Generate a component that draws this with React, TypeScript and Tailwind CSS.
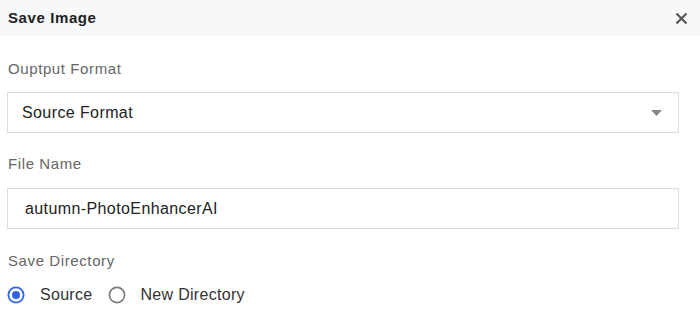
import React, { useState } from 'react';

const font = { fontFamily: '"Liberation Sans", Arial, sans-serif' };

const Radio: React.FC<{ checked: boolean; label: string; onClick: () => void }> = ({ checked, label, onClick }) => (
  <button type="button" onClick={onClick} className="flex items-center h-5 text-[16px] tracking-[0.3px] text-[#333]">
    <svg width="18" height="18" viewBox="0 0 18 18" className="shrink-0">
      {checked ? (
        <>
          <circle cx="9" cy="9" r="7.6" fill="none" stroke="#2f66e0" strokeWidth="1.8" />
          <circle cx="9" cy="9" r="4" fill="#2f66e0" />
        </>
      ) : (
        <circle cx="9" cy="9" r="7.6" fill="none" stroke="#7a7a7a" strokeWidth="1.6" />
      )}
    </svg>
    <span className="ml-[15px]">{label}</span>
  </button>
);

export default function App() {
  const [dir, setDir] = useState<'source' | 'new'>('source');
  const [name, setName] = useState('autumn-PhotoEnhancerAI');

  return (
    <div className="w-[700px] h-[321px] bg-white overflow-hidden" style={font}>
      <div className="h-9 bg-[#f7f8fa] flex items-center justify-between pl-2 pr-3">
        <h2 className="text-[15px] font-bold tracking-[0.6px] text-[#222]">Save Image</h2>
        <svg width="13" height="13" viewBox="0 0 13 13">
          <path d="M1.5 1.5 L11.5 11.5 M11.5 1.5 L1.5 11.5" stroke="#555" strokeWidth="2.2" />
        </svg>
      </div>

      <div className="flex flex-col pl-[7px]">
        <label className="mt-[23px] h-5 leading-5 text-[15px] tracking-[0.6px] text-[#666] pl-px">Ouptput Format</label>
        <div className="mt-[13px] w-[672px] h-[41px] border border-[#dcdcdc] flex items-center justify-between pl-[14px] pr-[16px]">
          <span className="text-[16px] tracking-[0.4px] text-[#222]">Source Format</span>
          <svg width="11" height="6" viewBox="0 0 11 6">
            <path d="M0 0 L11 0 L5.5 6 Z" fill="#888" />
          </svg>
        </div>

        <label className="mt-[21px] h-5 leading-5 text-[15px] tracking-[0.6px] text-[#666] pl-px">File Name</label>
        <input
          value={name}
          onChange={(e) => setName(e.target.value)}
          className="mt-[14px] w-[672px] h-[41px] border border-[#dcdcdc] pl-[17px] text-[16px] tracking-[0.4px] text-[#222] outline-none"
          style={font}
        />

        <label className="mt-[22px] h-5 leading-5 text-[15px] tracking-[0.6px] text-[#666] pl-px">Save Directory</label>
        <div className="mt-[14px] flex items-center gap-[15px]">
          <Radio checked={dir === 'source'} label="Source" onClick={() => setDir('source')} />
          <Radio checked={dir === 'new'} label="New Directory" onClick={() => setDir('new')} />
        </div>
      </div>
    </div>
  );
}
